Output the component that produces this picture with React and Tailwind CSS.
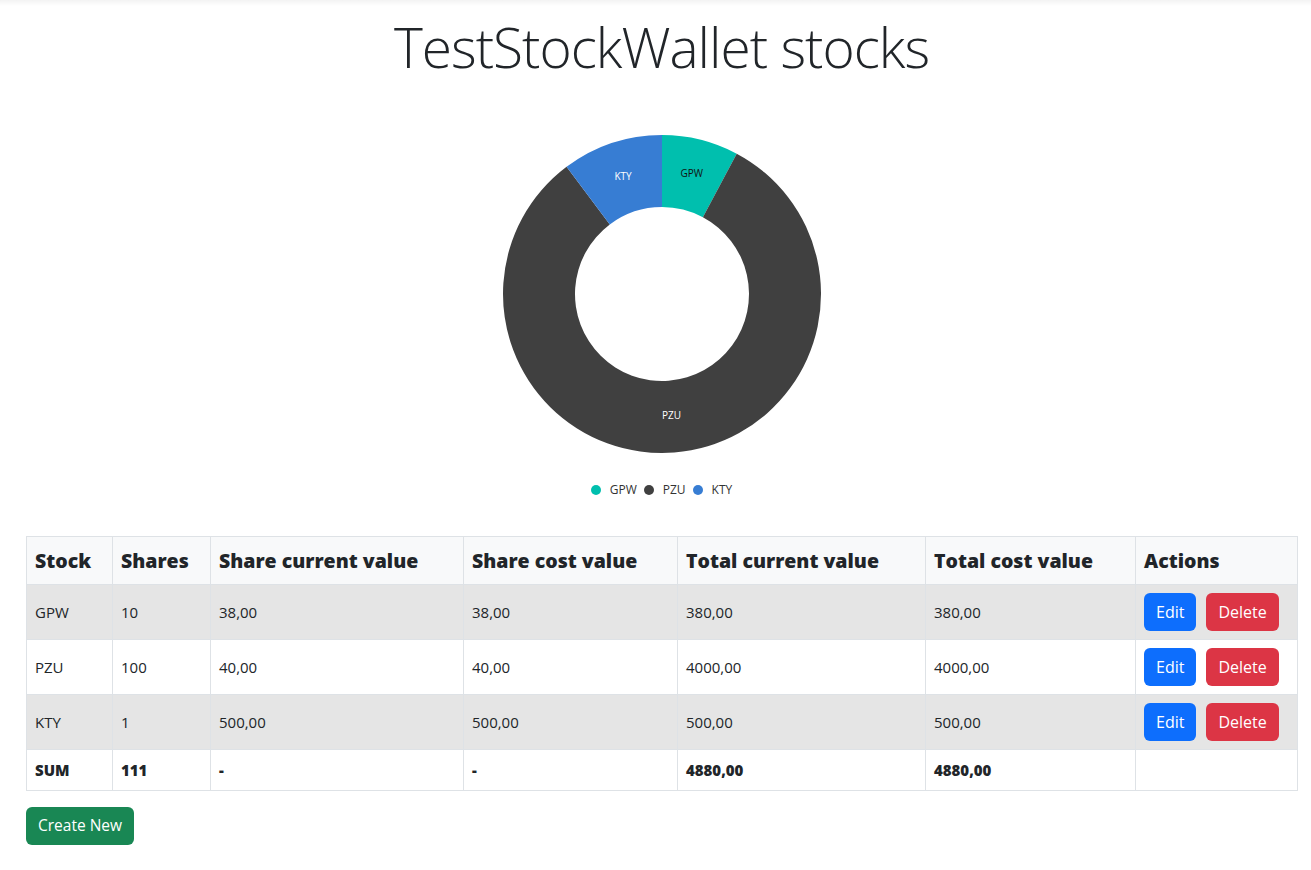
import React from 'react';

const stocks = [
  { name: 'GPW', shares: 10, cur: '38,00', cost: '38,00', totalCur: '380,00', totalCost: '380,00', value: 380, color: '#00bfae', label: '#111' },
  { name: 'PZU', shares: 100, cur: '40,00', cost: '40,00', totalCur: '4000,00', totalCost: '4000,00', value: 4000, color: '#404040', label: '#fff' },
  { name: 'KTY', shares: 1, cur: '500,00', cost: '500,00', totalCur: '500,00', totalCost: '500,00', value: 500, color: '#377dd3', label: '#fff' },
];

const font = { fontFamily: '"Open Sans", "Noto Sans", sans-serif' };

function point(cx, cy, rad, deg) {
  const a = (deg * Math.PI) / 180;
  return [cx + rad * Math.sin(a), cy - rad * Math.cos(a)];
}

function slicePath(cx, cy, R, r, a0, a1) {
  const large = a1 - a0 > 180 ? 1 : 0;
  const [x0, y0] = point(cx, cy, R, a0);
  const [x1, y1] = point(cx, cy, R, a1);
  const [x2, y2] = point(cx, cy, r, a1);
  const [x3, y3] = point(cx, cy, r, a0);
  return `M${x0} ${y0} A${R} ${R} 0 ${large} 1 ${x1} ${y1} L${x2} ${y2} A${r} ${r} 0 ${large} 0 ${x3} ${y3} Z`;
}

function Donut() {
  const total = stocks.reduce((s, x) => s + x.value, 0);
  let start = 0;
  const cx = 170, cy = 170, R = 159, r = 87;
  return (
    <svg width="340" height="340" viewBox="0 0 340 340">
      {stocks.map((s) => {
        const a0 = start;
        const a1 = start + (s.value / total) * 360;
        start = a1;
        const [lx, ly] = point(cx, cy, (R + r) / 2, (a0 + a1) / 2);
        return (
          <g key={s.name}>
            <path d={slicePath(cx, cy, R, r, a0, a1)} fill={s.color} />
            <text x={lx} y={ly} fill={s.label} fontSize="10" textAnchor="middle" dominantBaseline="middle" style={font}>
              {s.name}
            </text>
          </g>
        );
      })}
    </svg>
  );
}

function App() {
  return (
    <div className="min-h-screen bg-white text-[#212529]" style={font}>
      <div className="h-[6px] bg-gradient-to-b from-[#f3f3f3] to-white" />
      <div className="ml-[26px] w-[1271px]">
        <h1 className="text-center text-[55px] font-light leading-[1.2] tracking-[-1px] mt-[8px]">TestStockWallet stocks</h1>

        <div className="flex justify-center mt-[44px]">
          <Donut />
        </div>
        <div className="flex justify-center items-center gap-[7px] mt-[17px] text-[12px] text-[#333]">
          {stocks.map((s) => (
            <div key={s.name} className="flex items-center gap-[9px]">
              <span className="w-[10px] h-[10px] rounded-full" style={{ backgroundColor: s.color }} />
              <span>{s.name}</span>
            </div>
          ))}
        </div>

        <table className="w-full mt-[37px] border-collapse table-fixed">
          <colgroup>
            <col className="w-[86px]" />
            <col className="w-[98px]" />
            <col className="w-[253px]" />
            <col className="w-[214px]" />
            <col className="w-[248px]" />
            <col className="w-[210px]" />
            <col className="w-[162px]" />
          </colgroup>
          <thead>
            <tr className="bg-[#f8f9fa]">
              {['Stock', 'Shares', 'Share current value', 'Share cost value', 'Total current value', 'Total cost value', 'Actions'].map((h) => (
                <th key={h} className="border border-[#dee2e6] px-[8px] py-[8px] text-left text-[19.5px] leading-[31px] font-extrabold">
                  {h}
                </th>
              ))}
            </tr>
          </thead>
          <tbody>
            {stocks.map((s, i) => (
              <tr key={s.name} className={i % 2 === 0 ? 'bg-[#e5e5e5]' : 'bg-white'}>
                <td className="border border-[#dee2e6] px-[8px] py-[8px] text-[15px]">{s.name}</td>
                <td className="border border-[#dee2e6] px-[8px] py-[8px] text-[15px]">{s.shares}</td>
                <td className="border border-[#dee2e6] px-[8px] py-[8px] text-[15px]">{s.cur}</td>
                <td className="border border-[#dee2e6] px-[8px] py-[8px] text-[15px]">{s.cost}</td>
                <td className="border border-[#dee2e6] px-[8px] py-[8px] text-[15px]">{s.totalCur}</td>
                <td className="border border-[#dee2e6] px-[8px] py-[8px] text-[15px]">{s.totalCost}</td>
                <td className="border border-[#dee2e6] px-[8px] py-[8px]">
                  <div className="flex gap-[10px]">
                    <button className="h-[38px] px-[12px] rounded-[6px] bg-[#0d6efd] text-white text-[16px]">Edit</button>
                    <button className="h-[38px] px-[12px] rounded-[6px] bg-[#dc3545] text-white text-[16px]">Delete</button>
                  </div>
                </td>
              </tr>
            ))}
            <tr className="bg-white font-extrabold text-[15px]">
              <td className="border border-[#dee2e6] px-[8px] py-[8px] leading-[24px]">SUM</td>
              <td className="border border-[#dee2e6] px-[8px] py-[8px] leading-[24px]">111</td>
              <td className="border border-[#dee2e6] px-[8px] py-[8px] leading-[24px]">-</td>
              <td className="border border-[#dee2e6] px-[8px] py-[8px] leading-[24px]">-</td>
              <td className="border border-[#dee2e6] px-[8px] py-[8px] leading-[24px]">4880,00</td>
              <td className="border border-[#dee2e6] px-[8px] py-[8px] leading-[24px]">4880,00</td>
              <td className="border border-[#dee2e6] px-[8px] py-[8px] leading-[24px]"></td>
            </tr>
          </tbody>
        </table>

        <button className="mt-[16px] h-[38px] px-[12px] rounded-[6px] bg-[#198754] text-white text-[15.5px]">Create New</button>
      </div>
    </div>
  );
}

export default App;
